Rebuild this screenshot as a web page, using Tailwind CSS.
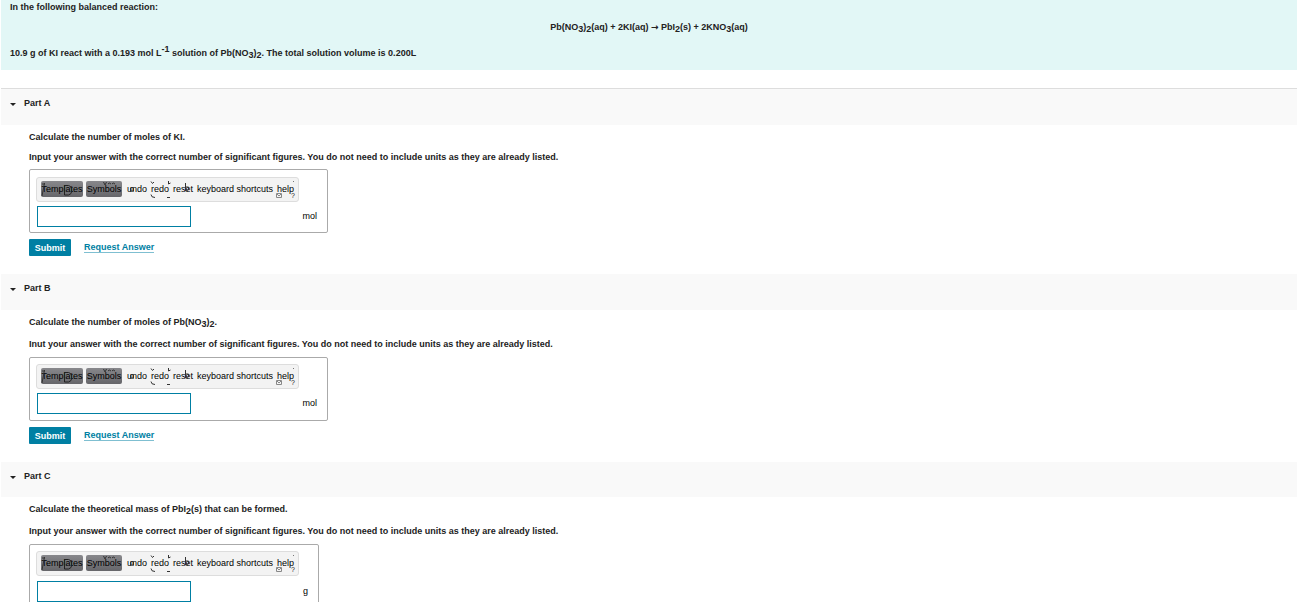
<!DOCTYPE html>
<html lang="en">
<head>
<meta charset="utf-8">
<title>Balanced reaction</title>
<script src="https://cdn.jsdelivr.net/npm/@tailwindcss/browser@4"></script>
</head>
<body class="h-screen overflow-hidden bg-white pl-px pr-2 font-['Liberation_Sans',Arial,sans-serif] text-[9px] leading-[10px] text-[#222]">
<svg class="hidden" aria-hidden="true">
  <symbol id="marks" viewBox="0 0 263 25">
    <g fill="none" stroke="#333">
      <path d="M8.500 6 6 19M6 7h3" />
      <path stroke="#222" d="M28.500 8v10h4q3-1 3-3v-3q0-3-3-3.500h-4" />
      <path d="M67.500 5l1.500 3 1.500-3M72 7q1-2 3 0M76 7q1-2 3 0" />
      <path d="M94.500 14v-3q1.500-1.500 3 0v3z" />
      <path d="M115 4.500l1.500 2 1.500-1.500M132.500 4v3l2-1M115 17.500q0 3 4 3M131 20.500h3" />
      <path d="M149.500 6v8q2 0 3-1v-3h-3" />
      <path stroke="#888" d="M240.500 16.500h5v4h-5zM241 17l2 2 2-2" />
      <path stroke="#777" d="M257 4.500h1" />
    </g>
    <text x="255" y="21" font-size="7" fill="#222">?</text>
  </symbol>
</svg>

<header class="h-[70px] bg-[#e2f7f6] px-[9px] pt-[2px] font-bold">
  <p>In the following balanced reaction:</p>
  <p class="mt-[10px] text-center">Pb(NO<sub class="text-[9px]">3</sub>)<sub class="text-[9px]">2</sub>(aq) + 2KI(aq) <span class="font-['DejaVu_Sans',sans-serif]">→</span> PbI<sub class="text-[9px]">2</sub>(s) + 2KNO<sub class="text-[9px]">3</sub>(aq)</p>
  <p class="mt-4">10.9 g of KI react with a 0.193 mol L<sup class="text-[9px]">-1</sup> solution of Pb(NO<sub class="text-[9px]">3</sub>)<sub class="text-[9px]">2</sub>. The total solution volume is 0.200L</p>
</header>

<main class="pt-[18px]">
  <section class="pb-[18px]">
    <h2 class="flex h-[37px] items-start gap-2 border-t border-[#ddd] bg-[#f9f9f9] pl-[9px] pt-[9px] font-bold">
      <svg class="mt-[5px] h-[3px] w-[6px]" viewBox="0 0 6 3" aria-hidden="true"><path d="M0 0h6L3 3z" fill="#222"/></svg>Part A</h2>
    <div class="pl-7 pt-[7px]">
      <p class="font-bold">Calculate the number of moles of KI.</p>
      <p class="mt-[10px] font-bold"><label for="a">Input your answer with the correct number of significant figures. You do not need to include units as they are already listed.</label></p>
      <div class="mt-[7px] h-16 w-[299px] rounded-xs border border-[#aaa] pl-[6px] pt-[7px] text-black">
        <div class="relative flex h-[25px] w-[263px] items-center rounded-[3px] border border-[#ddd] bg-[#f3f3f3] pb-px pl-1 whitespace-nowrap">
          <button class="h-4 w-[42px] rounded-xs bg-linear-to-b from-[#88888c] to-[#66666a]">Templates</button>
          <button class="ml-[3px] h-4 w-9 rounded-xs bg-linear-to-b from-[#88888c] to-[#66666a]">Symbols</button>
          <button class="ml-[5px]">undo</button><button class="ml-1">redo</button><button class="ml-1">reset</button><button class="ml-1">keyboard shortcuts</button><button class="ml-1">help</button>
          <svg class="pointer-events-none absolute -left-px -top-px h-[25px] w-[263px]" aria-hidden="true"><use href="#marks"/></svg>
        </div>
        <div class="mt-1 flex items-center pr-[10px]"><input id="a" type="text" class="ml-px h-[21px] w-[154px] border border-[#007fa3] bg-white px-1"><span class="ml-auto pb-px">mol</span></div>
      </div>
      <div class="mt-[6px] flex items-start gap-[13px] font-bold">
        <button class="h-[17px] w-[42px] rounded-[1px] bg-[#007fa3] pt-px text-white">Submit</button>
        <a href="#" class="mt-[3px] border-b border-[#7fbfd1] text-[#007fa3]">Request Answer</a>
      </div>
    </div>
  </section>

  <section class="pb-[18px]">
    <h2 class="flex h-9 items-start gap-2 bg-[#f9f9f9] pl-[9px] pt-[9px] font-bold">
      <svg class="mt-[5px] h-[3px] w-[6px]" viewBox="0 0 6 3" aria-hidden="true"><path d="M0 0h6L3 3z" fill="#222"/></svg>Part B</h2>
    <div class="pl-7 pt-[7px]">
      <p class="font-bold">Calculate the number of moles of Pb(NO<sub class="text-[9px]">3</sub>)<sub class="text-[9px]">2</sub>.</p>
      <p class="mt-3 font-bold"><label for="b">Inut your answer with the correct number of significant figures. You do not need to include units as they are already listed.</label></p>
      <div class="mt-[8px] h-16 w-[299px] rounded-xs border border-[#aaa] pl-[6px] pt-[6px] text-black">
        <div class="relative flex h-[25px] w-[263px] items-center rounded-[3px] border border-[#ddd] bg-[#f3f3f3] pb-px pl-1 whitespace-nowrap">
          <button class="h-4 w-[42px] rounded-xs bg-linear-to-b from-[#88888c] to-[#66666a]">Templates</button>
          <button class="ml-[3px] h-4 w-9 rounded-xs bg-linear-to-b from-[#88888c] to-[#66666a]">Symbols</button>
          <button class="ml-[5px]">undo</button><button class="ml-1">redo</button><button class="ml-1">reset</button><button class="ml-1">keyboard shortcuts</button><button class="ml-1">help</button>
          <svg class="pointer-events-none absolute -left-px -top-px h-[25px] w-[263px]" aria-hidden="true"><use href="#marks"/></svg>
        </div>
        <div class="mt-1 flex items-center pr-[10px]"><input id="b" type="text" class="ml-px h-[21px] w-[154px] border border-[#007fa3] bg-white px-1"><span class="ml-auto pb-px">mol</span></div>
      </div>
      <div class="mt-[6px] flex items-start gap-[13px] font-bold">
        <button class="h-[17px] w-[42px] rounded-[1px] bg-[#007fa3] pt-px text-white">Submit</button>
        <a href="#" class="mt-[3px] border-b border-[#7fbfd1] text-[#007fa3]">Request Answer</a>
      </div>
    </div>
  </section>

  <section>
    <h2 class="flex h-[35px] items-start gap-2 bg-[#f9f9f9] pl-[9px] pt-[9px] font-bold">
      <svg class="mt-[5px] h-[3px] w-[6px]" viewBox="0 0 6 3" aria-hidden="true"><path d="M0 0h6L3 3z" fill="#222"/></svg>Part C</h2>
    <div class="pl-7 pt-[7px]">
      <p class="font-bold">Calculate the theoretical mass of PbI<sub class="text-[9px]">2</sub>(s) that can be formed.</p>
      <p class="mt-3 font-bold"><label for="c">Input your answer with the correct number of significant figures. You do not need to include units as they are already listed.</label></p>
      <div class="mt-[8px] h-16 w-[290px] rounded-xs border border-[#aaa] pl-[6px] pt-[6px] text-black">
        <div class="relative flex h-[25px] w-[263px] items-center rounded-[3px] border border-[#ddd] bg-[#f3f3f3] pb-px pl-1 whitespace-nowrap">
          <button class="h-4 w-[42px] rounded-xs bg-linear-to-b from-[#88888c] to-[#66666a]">Templates</button>
          <button class="ml-[3px] h-4 w-9 rounded-xs bg-linear-to-b from-[#88888c] to-[#66666a]">Symbols</button>
          <button class="ml-[5px]">undo</button><button class="ml-1">redo</button><button class="ml-1">reset</button><button class="ml-1">keyboard shortcuts</button><button class="ml-1">help</button>
          <svg class="pointer-events-none absolute -left-px -top-px h-[25px] w-[263px]" aria-hidden="true"><use href="#marks"/></svg>
        </div>
        <div class="mt-[5px] flex items-center pr-[10px]"><input id="c" type="text" class="ml-px h-[21px] w-[154px] border border-[#007fa3] bg-white px-1"><span class="ml-auto pb-px">g</span></div>
      </div>
    </div>
  </section>
</main>
</body>
</html>
